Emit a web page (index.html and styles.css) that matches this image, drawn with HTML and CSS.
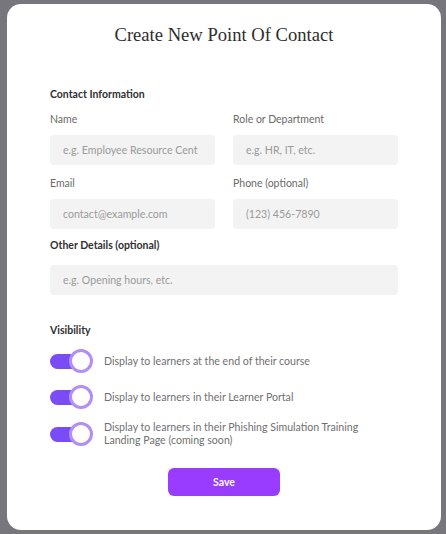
FILE: index.html
```html
<!DOCTYPE html>
<html>
<head>
<meta charset="utf-8">
<link rel="stylesheet" href="styles.css">
</head>
<body>
<div class="modal">
  <h1 class="title">Create New Point Of Contact</h1>
  <h2 class="section">Contact Information</h2>
  <div class="grid">
    <div class="field">
      <label class="label">Name</label>
      <div class="input">e.g. Employee Resource Cent</div>
    </div>
    <div class="field">
      <label class="label">Role or Department</label>
      <div class="input">e.g. HR, IT, etc.</div>
    </div>
    <div class="field">
      <label class="label">Email</label>
      <div class="input">contact@example.com</div>
    </div>
    <div class="field">
      <label class="label">Phone (optional)</label>
      <div class="input">(123) 456-7890</div>
    </div>
  </div>
  <h2 class="section other">Other Details (optional)</h2>
  <div class="input wide">e.g. Opening hours, etc.</div>
  <h2 class="section vis">Visibility</h2>
  <div class="toggles">
    <div class="row">
      <span class="toggle"><span class="knob"></span></span>
      <span class="rtext">Display to learners at the end of their course</span>
    </div>
    <div class="row">
      <span class="toggle"><span class="knob"></span></span>
      <span class="rtext">Display to learners in their Learner Portal</span>
    </div>
    <div class="row">
      <span class="toggle"><span class="knob"></span></span>
      <span class="rtext">Display to learners in their Phishing Simulation Training<br>Landing Page (coming soon)</span>
    </div>
  </div>
  <div class="actions"><button class="save">Save</button></div>
</div>
</body>
</html>
```
FILE: styles.css
```css
html, body {
  margin: 0;
  padding: 0;
}
body {
  background: #78767d;
  width: 446px;
  height: 534px;
  overflow: hidden;
  font-family: "Lato", "Open Sans", sans-serif;
}
.modal {
  box-sizing: border-box;
  margin: 4px 0 0 7px;
  width: 434px;
  height: 526px;
  background: #ffffff;
  border-radius: 14px;
  padding: 19px 43px 0 43px;
}
.title {
  margin: 0;
  text-align: center;
  font-family: "Liberation Serif", "DejaVu Serif", serif;
  font-weight: normal;
  font-size: 18.6px;
  line-height: 24px;
  color: #2e2e2e;
}
.section {
  margin: 40px 0 0 0;
  font-size: 10.5px;
  line-height: 14px;
  font-weight: 700;
  color: #2f2f2f;
}
.grid {
  margin-top: 11px;
  display: grid;
  grid-template-columns: 165px 165px;
  column-gap: 18px;
  row-gap: 11px;
}
.field {
  display: flex;
  flex-direction: column;
}
.label {
  font-size: 10.5px;
  line-height: 14px;
  color: #6a6a6a;
  margin-bottom: 9px;
}
.input {
  box-sizing: border-box;
  height: 30px;
  background: #f3f3f3;
  border-radius: 4px;
  padding-left: 13px;
  font-size: 10.6px;
  line-height: 30px;
  color: #9a9a9a;
  white-space: nowrap;
  overflow: hidden;
}
.other {
  margin-top: 9px;
}
.wide {
  margin-top: 13px;
  width: 348px;
}
.vis {
  margin-top: 28px;
}
.toggles {
  margin-top: 12px;
  display: flex;
  flex-direction: column;
  gap: 12px;
}
.row {
  display: flex;
  align-items: center;
  gap: 11px;
  min-height: 24px;
}
.toggle {
  position: relative;
  flex: none;
  width: 43px;
  height: 24px;
  display: flex;
  align-items: center;
}
.toggle::before {
  content: "";
  display: block;
  width: 32px;
  height: 15px;
  border-radius: 8px;
  background: #7a4cf6;
}
.knob {
  position: absolute;
  right: 0;
  top: 0;
  box-sizing: border-box;
  width: 24px;
  height: 24px;
  border-radius: 50%;
  background: #ffffff;
  border: 3px solid #b28ef5;
}
.rtext {
  font-size: 10.6px;
  line-height: 13px;
  color: #707070;
}
.actions {
  margin-top: 21px;
  display: flex;
  justify-content: center;
}
.save {
  width: 112px;
  height: 28px;
  border: none;
  border-radius: 6px;
  background: #9a3cff;
  color: #ffffff;
  font-family: "Lato", "Open Sans", sans-serif;
  font-weight: 700;
  font-size: 10.5px;
  cursor: pointer;
}
```
